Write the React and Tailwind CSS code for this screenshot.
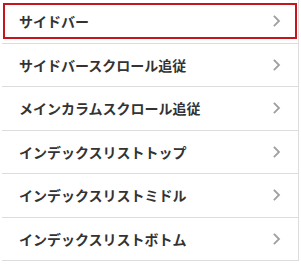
import React from "react";

const items = [
  "サイドバー",
  "サイドバースクロール追従",
  "メインカラムスクロール追従",
  "インデックスリストトップ",
  "インデックスリストミドル",
  "インデックスリストボトム",
];

function Chevron() {
  return (
    <svg width="8" height="12" viewBox="0 0 8 12" className="shrink-0">
      <path d="M1.5 1.5 L6 6 L1.5 10.5" fill="none" stroke="#a0a0a0" strokeWidth="1.8" strokeLinecap="square" />
    </svg>
  );
}

export default function App() {
  return (
    <div className="w-[301px] h-[277px] bg-white" style={{ fontFamily: '"Noto Sans CJK JP", "Noto Sans", sans-serif' }}>
      <div className="w-[299px] border-r border-[#dddddd] pl-[2px]">
        {items.map((t, i) => (
          <div
            key={i}
            className="relative flex items-center justify-between h-[43.5px] border-b border-[#dddddd] pl-[17px] pr-[17px]"
          >
            {i === 0 && (
              <div className="absolute left-[1px] top-[3px] right-[1px] bottom-[4px] border-2 border-[#c4161c]" />
            )}
            <span className="text-[14px] font-bold text-[#333333] leading-none">{t}</span>
            <Chevron />
          </div>
        ))}
      </div>
    </div>
  );
}
